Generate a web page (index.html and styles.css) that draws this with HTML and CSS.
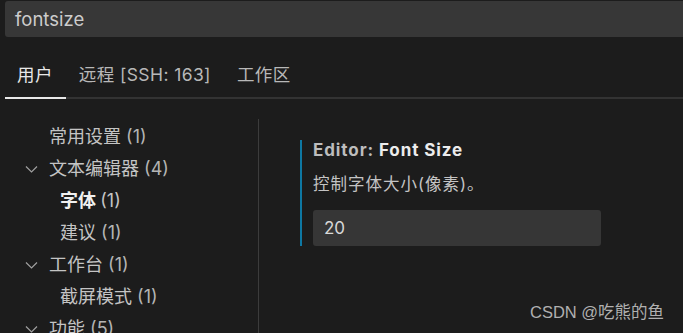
FILE: index.html
```html
<!DOCTYPE html>
<html>

<head>
  <title>Settings</title>
  <link rel="stylesheet" href="styles.css">
</head>

<body>
  <div class="search-box">fontsize</div>

  <div class="tab-bar">
    <div class="tab active">用户</div>
    <div class="tab">远程 [SSH: 163]</div>
    <div class="tab">工作区</div>
  </div>

  <div class="main">
    <div class="toc">
      <div class="toc-row">常用设置 <span class="count">(1)</span></div>
      <div class="toc-row"><span class="chevron"><svg width="13" height="8" viewBox="0 0 13 8"><path d="M1 1.5 L6.5 7 L12 1.5" fill="none" stroke="#a0a0a0" stroke-width="1.2"/></svg></span>文本编辑器 <span class="count">(4)</span></div>
      <div class="toc-row sub selected">字体 <span class="count">(1)</span></div>
      <div class="toc-row sub">建议 <span class="count">(1)</span></div>
      <div class="toc-row"><span class="chevron"><svg width="13" height="8" viewBox="0 0 13 8"><path d="M1 1.5 L6.5 7 L12 1.5" fill="none" stroke="#a0a0a0" stroke-width="1.2"/></svg></span>工作台 <span class="count">(1)</span></div>
      <div class="toc-row sub">截屏模式 <span class="count">(1)</span></div>
      <div class="toc-row"><span class="chevron"><svg width="13" height="8" viewBox="0 0 13 8"><path d="M1 1.5 L6.5 7 L12 1.5" fill="none" stroke="#a0a0a0" stroke-width="1.2"/></svg></span>功能 <span class="count">(5)</span></div>
    </div>

    <div class="settings">
      <div class="setting-item">
        <div class="setting-title"><span class="category">Editor: </span>Font Size</div>
        <div class="setting-desc">控制字体大小(像素)。</div>
        <div class="setting-input">20</div>
      </div>
    </div>
  </div>

  <div class="watermark">CSDN @吃熊的鱼</div>
</body>

</html>
```

FILE: styles.css
```css
body {
  margin: 0;
  background-color: #1c1c1c;
  color: #c6c6c6;
  font-family: Inter, "Noto Sans CJK SC", sans-serif;
  height: 333px;
  overflow: hidden;
  position: relative;
}

.search-box {
  margin: 1px 0 0 5px;
  height: 36px;
  line-height: 36px;
  padding-left: 10px;
  background-color: #373737;
  border-radius: 3px 0 0 3px;
  font-size: 18.5px;
  color: #cccccc;
}

.tab-bar {
  display: flex;
  margin-left: 5px;
  border-bottom: 2px solid #333333;
}

.tab {
  padding: 24px 13px 8px;
  line-height: 28px;
  font-size: 17.5px;
  letter-spacing: 0.4px;
  color: #b8b8b8;
  margin-bottom: -2px;
  border-bottom: 2px solid transparent;
}

.tab.active {
  padding-left: 12px;
  color: #e8e8e8;
  border-bottom-color: #e8e8e8;
}

.main {
  display: flex;
}

.toc {
  width: 259px;
  margin-top: 20px;
  padding-top: 6px;
  border-right: 1px solid #3c3c3c;
  height: 240px;
  box-sizing: border-box;
}

.toc-row {
  height: 32px;
  line-height: 32px;
  font-size: 18px;
  padding-left: 49px;
  position: relative;
  color: #c4c4c4;
}

.toc-row:first-child {
  margin-top: -4px;
}

.toc-row.sub {
  padding-left: 60px;
}

.toc-row.selected {
  color: #f0f0f0;
  font-weight: bold;
}

.toc-row.selected .count {
  font-weight: normal;
  color: #c4c4c4;
}

.count {
  color: #b4b4b4;
}

.chevron {
  position: absolute;
  left: 25px;
  top: 12px;
  line-height: 0;
}

.settings {
  flex: 1;
  padding-top: 44px;
}

.setting-item {
  margin-left: 41px;
  border-left: 2px solid #0e78a3;
  padding-left: 11px;
  width: 288px;
}

.setting-title {
  font-size: 17px;
  font-weight: bold;
  letter-spacing: 0.9px;
  color: #ececec;
  line-height: 20px;
  margin-top: -3px;
}

.category {
  color: #bdbdbd;
}

.setting-desc {
  font-size: 16.5px;
  letter-spacing: 1px;
  line-height: 24px;
  margin-top: 12px;
  color: #c4c4c4;
}

.setting-input {
  margin-top: 14px;
  height: 36px;
  line-height: 36px;
  background-color: #363636;
  border-radius: 3px;
  padding-left: 11px;
  font-size: 17px;
  color: #d8d8d8;
}

.watermark {
  position: absolute;
  left: 530px;
  top: 299px;
  font-family: "Liberation Sans", "Noto Sans CJK SC", sans-serif;
  font-size: 16.5px;
  color: #b0b0b0;
}
```
